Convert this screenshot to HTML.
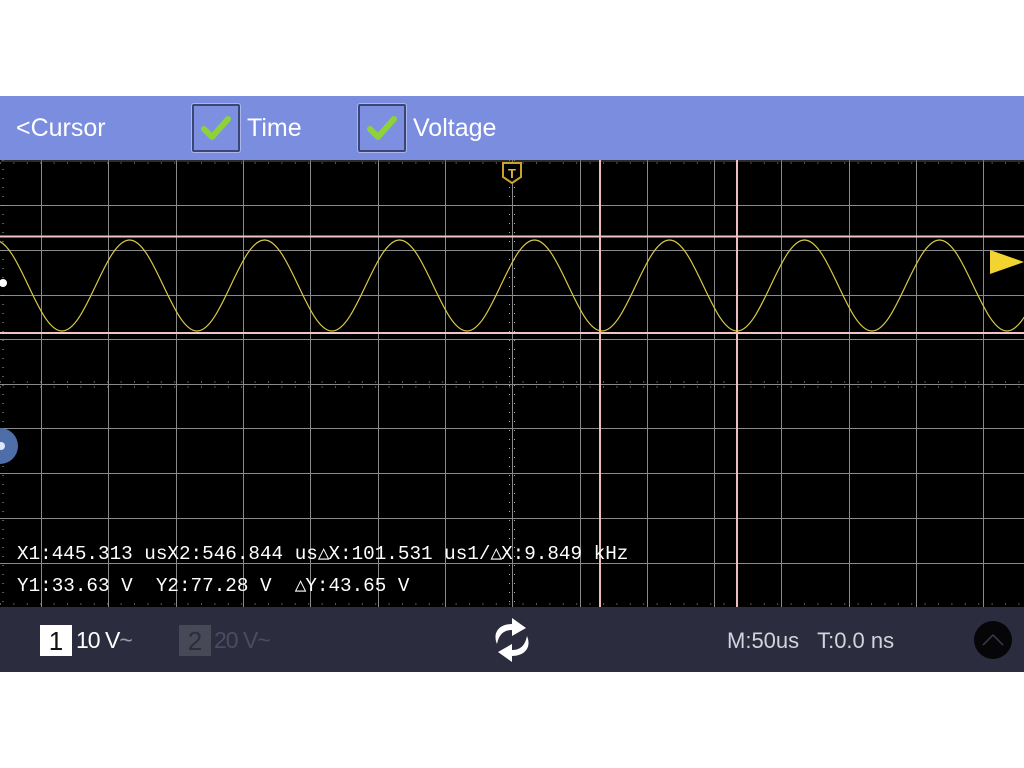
<!DOCTYPE html>
<html><head><meta charset="utf-8"><style>
body{margin:0;width:1024px;height:768px;background:#fff;position:relative;overflow:hidden;font-family:"Liberation Sans",sans-serif}
.top{position:absolute;left:0;top:96px;width:1024px;height:64px;background:#7b8ddf}
.t{position:absolute;color:#fff;font-size:25px;top:114px}
.cb{position:absolute;top:104px;width:44px;height:44px;border:2px solid #3b4675;box-shadow:0 0 0 1px #a9b5ec;background:#7d8fe0;border-radius:2px}
.bot{position:absolute;left:0;top:607px;width:1024px;height:65px;background:#2b2d3e}
.mono{position:absolute;font-family:"Liberation Mono",monospace;font-size:19.3px;color:#fff;left:17px;white-space:pre}
.d{letter-spacing:-1px}
</style></head><body>
<div class="top"></div>
<div class="t" style="left:16px">&lt;Cursor</div>
<div class="cb" style="left:192px"><svg width="44" height="44"><path d="M10 23 L18 31 L34 13" stroke="#8fd13a" stroke-width="6" fill="none" stroke-linecap="round" stroke-linejoin="round"/></svg></div>
<div class="t" style="left:247px">Time</div>
<div class="cb" style="left:358px"><svg width="44" height="44"><path d="M10 23 L18 31 L34 13" stroke="#8fd13a" stroke-width="6" fill="none" stroke-linecap="round" stroke-linejoin="round"/></svg></div>
<div class="t" style="left:413px">Voltage</div>

<svg style="position:absolute;left:0;top:160px" width="1024" height="447" viewBox="0 160 1024 447">
<rect x="0" y="160" width="1024" height="447" fill="#000"/>
<g stroke="#8a8a8a" stroke-width="1">
<path d="M41.5 160V607M108.5 160V607M176.5 160V607M243.5 160V607M310.5 160V607M378.5 160V607M445.5 160V607M512.5 160V607M580.5 160V607M647.5 160V607M714.5 160V607M781.5 160V607M849.5 160V607M916.5 160V607M983.5 160V607"/>
<path d="M0 205.5H1024M0 250.5H1024M0 295.5H1024M0 339.5H1024M0 384.5H1024M0 428.5H1024M0 473.5H1024M0 518.5H1024M0 563.5H1024"/>
</g>
<g stroke="#aaa" stroke-width="1" stroke-dasharray="1 12.4">
<path d="M0 163H1024M0 604H1024M0 382H1024M0 387H1024"/>
<path d="M3 160V607M509.5 160V607M514.5 160V607" stroke-dasharray="1 8"/>
</g>
<path d="M1 161H1024" stroke="#555"/>
<path d="M0 236.5H1024M0 333H1024" stroke="#f0c4c4" stroke-width="2"/>
<path d="M600 160V607M737 160V607" stroke="#eebcbc" stroke-width="2"/>
<path d="M-73 331 C-48.5 331 -30 240 -5.5 240 S37.5 331 62 331 S105 240 129.5 240 S172.5 331 197 331 S240 240 264.5 240 S307.5 331 332 331 S375 240 399.5 240 S442.5 331 467 331 S510 240 534.5 240 S577.5 331 602 331 S645 240 669.5 240 S712.5 331 737 331 S780 240 804.5 240 S847.5 331 872 331 S915 240 939.5 240 S982.5 331 1007 331 S1050 240 1074.5 240" stroke="#d9ca48" stroke-width="1.2" fill="none"/>
<path d="M990 250 L1024 262 L990 274Z" fill="#f2d430"/>
<circle cx="3" cy="283" r="4" fill="#fff"/>
<circle cx="0" cy="446" r="18" fill="#4e6eaa"/>
<circle cx="1" cy="446" r="4" fill="#dde6ff"/>
<path d="M503 163H521V177L512 183L503 177Z" fill="#000" stroke="#c9a22c" stroke-width="2"/>
<text x="512" y="178" font-family="Liberation Sans" font-weight="bold" font-size="13" fill="#e0b43a" text-anchor="middle">T</text>
</svg>
<div class="mono" style="top:541px">X1:445.313 usX2:546.844 us<span class="d">△</span>X:101.531 us1/<span class="d">△</span>X:9.849 kHz</div>
<div class="mono" style="top:573px">Y1:33.63 V  Y2:77.28 V  <span class="d">△</span>Y:43.65 V</div>

<div class="bot"></div>
<div style="position:absolute;left:40px;top:625px;width:32px;height:31px;background:#fff;color:#111;font-size:26px;text-align:center;line-height:32px">1</div>
<div style="position:absolute;left:76px;top:627px;color:#fff;font-size:23px;letter-spacing:-1px">10 V<span style="color:#9a9cb0">~</span></div>
<div style="position:absolute;left:179px;top:625px;width:32px;height:31px;background:#474956;color:#2b2d3e;font-size:26px;text-align:center;line-height:32px">2</div>
<div style="position:absolute;left:214px;top:627px;color:#4b4d5e;font-size:23px;letter-spacing:-1px">20 V~</div>
<svg style="position:absolute;left:488px;top:614px" width="48" height="52" viewBox="0 0 48 52">
<path d="M9 30 C4 18 12 10 24 10 L24 4 L38 14 L24 22 L24 16 C16 16 11 20 9 30Z" fill="#fff"/>
<path d="M39 22 C44 34 36 42 24 42 L24 48 L10 38 L24 30 L24 36 C32 36 37 32 39 22Z" fill="#fff"/>
</svg>
<div style="position:absolute;left:727px;top:628px;color:#d2d4dc;font-size:22px">M:50us&nbsp;&nbsp; T:0.0 ns</div>
<svg style="position:absolute;left:973px;top:620px" width="40" height="40"><circle cx="20" cy="20" r="19" fill="#060608"/><path d="M10 25 L20 15 L30 25" stroke="#3a3c48" stroke-width="1.5" fill="none"/></svg>
</body></html>
